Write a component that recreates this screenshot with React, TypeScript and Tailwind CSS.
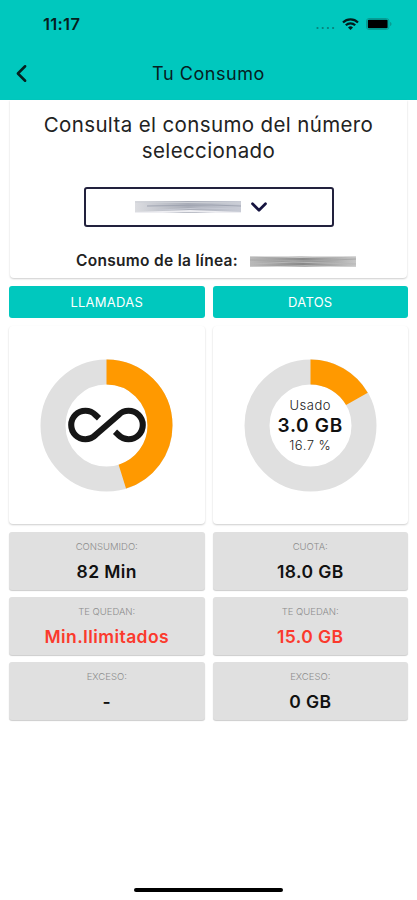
import { ChevronDown, ChevronLeft } from "lucide-react";
import type { ReactNode } from "react";

type Stat = { label: string; value: string; alert?: boolean };

const llamadas: Stat[] = [
  { label: "CONSUMIDO:", value: "82 Min" },
  { label: "TE QUEDAN:", value: "Min.Ilimitados", alert: true },
  { label: "EXCESO:", value: "-" },
];

const datos: Stat[] = [
  { label: "CUOTA:", value: "18.0 GB" },
  { label: "TE QUEDAN:", value: "15.0 GB", alert: true },
  { label: "EXCESO:", value: "0 GB" },
];

function Donut({ percent, children }: { percent: number; children: ReactNode }) {
  return (
    <div className="relative h-[133px] w-[133px]">
      <svg viewBox="0 0 133 133" className="h-full w-full -rotate-90">
        <circle cx="66.5" cy="66.5" r="53.5" fill="none" stroke="#e0e0e0" strokeWidth="25" />
        <circle
          cx="66.5"
          cy="66.5"
          r="53.5"
          fill="none"
          stroke="#ff9900"
          strokeWidth="25"
          pathLength="100"
          strokeDasharray={`${percent} 100`}
        />
      </svg>
      <div className="absolute inset-0 flex flex-col items-center justify-center">{children}</div>
    </div>
  );
}

function InfinityIcon() {
  return (
    <svg width="78" height="36" viewBox="0 0 78 36" fill="none" stroke="#161616" strokeWidth="6.1">
      <path d="M31 11.2L27.5 8A14.2 14.2 0 1 0 27.5 28L50.5 8A14.2 14.2 0 1 1 50.5 28L47 24.8" />
    </svg>
  );
}

function Column({ title, percent, stats, children }: { title: string; percent: number; stats: Stat[]; children: ReactNode }) {
  return (
    <div className="flex flex-col">
      <div className="flex h-8 items-center justify-center rounded-[3px] bg-[#00c8be] text-[13px] tracking-[0.25px] text-white">
        {title}
      </div>
      <div className="mt-2 mb-2 flex h-[198px] items-center justify-center rounded-[4px] bg-white shadow-[0_1px_2px_rgba(0,0,0,0.2)]">
        <Donut percent={percent}>{children}</Donut>
      </div>
      <div className="flex flex-col gap-[7px]">
        {stats.map((stat) => (
          <div
            key={stat.label}
            className="flex h-[58px] flex-col items-center rounded-[3px] bg-[#e0e0e0] pt-[8px] shadow-[0_1px_1px_rgba(0,0,0,0.2)]"
          >
            <p className="text-[9.5px] leading-[14px] font-light text-[#8c8c8c]">{stat.label}</p>
            <p
              className={
                stat.alert
                  ? "mt-[7px] text-[17.5px] leading-[22px] font-semibold tracking-[0.4px] text-[#fb3a2d]"
                  : "mt-[7px] text-[17.5px] leading-[22px] font-semibold tracking-[0.4px] text-[#111111]"
              }
            >
              {stat.value}
            </p>
          </div>
        ))}
      </div>
    </div>
  );
}

export default function App() {
  return (
    <main className="flex h-[900px] w-[417px] flex-col overflow-hidden bg-white font-['Inter',sans-serif] text-[#222222]">
      <header className="h-[100px] shrink-0 bg-[#00c8be] text-[#06201f]">
        {/* STATUS BAR */}
        <div className="flex h-12 items-center justify-between pr-[25px] pl-[43px]">
          <span className="text-[16.5px] font-semibold tracking-[0.3px]">11:17</span>
          <div className="flex items-center">
            <svg width="19" height="12" viewBox="0 0 19 12" fill="#087f79" className="mt-[2px] mr-[7px]">
              <circle cx="1.5" cy="9" r="1.1" />
              <circle cx="6.7" cy="9" r="1.1" />
              <circle cx="11.9" cy="9" r="1.1" />
              <circle cx="17.1" cy="9" r="1.1" />
            </svg>
            <svg width="17" height="12" viewBox="0 0 17 12" fill="none" stroke="#021c1b" strokeWidth="2.2" className="mr-[7px]">
              <path d="M1 4.5a10.6 10.6 0 0 1 15 0" />
              <path d="M3.8 7.3a6.6 6.6 0 0 1 9.4 0" />
              <path d="M8.5 12L6 9.4a3.6 3.6 0 0 1 5 0z" fill="#021c1b" stroke="none" />
            </svg>
            <svg width="26" height="12" viewBox="0 0 26 12" fill="none">
              <rect x="0.5" y="0.5" width="22.4" height="11" rx="2.5" stroke="#079c94" />
              <rect x="1.8" y="1.8" width="19.8" height="8.4" rx="1" fill="#000000" />
              <path d="M24 4v4c1-.4 1.5-1.1 1.5-2S25 4.4 24 4z" fill="#079c94" />
            </svg>
          </div>
        </div>
        {/* NAV BAR */}
        <div className="grid h-[50px] grid-cols-[60px_1fr_60px] items-center">
          <ChevronLeft size={29} strokeWidth={2.1} className="ml-[7px]" />
          <h1 className="text-center text-[18px] tracking-[0.55px]">Tu Consumo</h1>
        </div>
      </header>

      <section className="mx-[10px] flex h-[178px] shrink-0 flex-col items-center rounded-b-[4px] pt-[12px] shadow-[0_1px_2px_rgba(0,0,0,0.2)]">
        <h2 className="text-center text-[20.5px] leading-[26px] tracking-[0.37px] whitespace-nowrap">
          Consulta el consumo del número
          <br />
          seleccionado
        </h2>
        <button className="mt-[23px] flex h-[40px] w-[250px] items-center rounded-[3px] border-[2.5px] border-[#22213d] pl-[49px]">
          <span className="h-[12px] w-[106px] bg-linear-to-r from-[#dcdde1] via-[#a9adb8] to-[#c9ccd6]">
            <svg width="106" height="12" viewBox="0 0 106 12" fill="none">
              <path d="M0 1L106 2" stroke="#ced1d7" />
              <path d="M12 5L76 4L106 5" stroke="#a0a5b2" />
              <path d="M24 9L66 7L106 8" stroke="#c7cad4" />
              <path d="M0 12L55 10L106 12" stroke="#eeeef2" strokeWidth="2" />
            </svg>
          </span>
          <ChevronDown size={26} strokeWidth={2.5} className="ml-[5px] text-[#15133f]" />
        </button>
        <div className="mt-[22px] flex w-full items-center pl-[66px]">
          <span className="w-[174px] text-[15.5px] leading-[24px] font-semibold tracking-[0.3px] whitespace-nowrap">
            Consumo de la línea:
          </span>
          <span className="h-[11px] w-[106px] bg-linear-to-r from-[#bababa] via-[#898989] to-[#c7c7c7]">
            <svg width="106" height="11" viewBox="0 0 106 11" fill="none">
              <path d="M0 0L50 1L106 0" stroke="#dddddd" strokeWidth="1.5" />
              <path d="M0 4L60 5L106 3" stroke="#a7a7a7" />
              <path d="M0 8L43 6L106 8" stroke="#b8b8b8" />
              <path d="M0 11L55 10L106 11" stroke="#d8d8d8" />
            </svg>
          </span>
        </div>
      </section>

      <section className="mx-[9px] mt-[8.4px] grid grid-cols-2 gap-[8px]">
        <Column title="LLAMADAS" percent={45.2} stats={llamadas}>
          <InfinityIcon />
        </Column>
        <Column title="DATOS" percent={16.7} stats={datos}>
          <p className="text-[13px] leading-[18px] font-light tracking-[0.5px]">Usado</p>
          <p className="text-[19px] leading-[23px] font-semibold tracking-[0.7px] text-[#111111]">3.0 GB</p>
          <p className="text-[13px] leading-[17px] font-light tracking-[0.5px]">16.7 %</p>
        </Column>
      </section>

      <div className="mx-auto mt-auto mb-[8px] h-[4px] w-[149px] rounded-full bg-black" />
    </main>
  );
}
